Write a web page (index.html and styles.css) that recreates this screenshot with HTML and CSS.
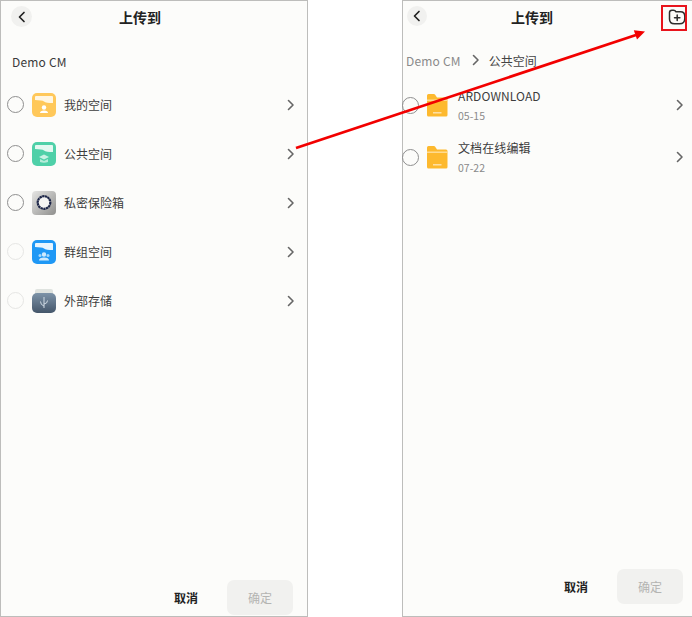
FILE: index.html
```html
<!DOCTYPE html>
<html lang="zh">
<head>
<meta charset="utf-8">
<title>上传到</title>
<link rel="stylesheet" href="styles.css">
</head>
<body>
<svg width="0" height="0" class="defs">
  <symbol id="chev" viewBox="0 0 10 14"><path d="M2.5 2.500 L7 7 L2.5 11.500" fill="none" stroke="#666" stroke-width="1.600" stroke-linecap="round" stroke-linejoin="round"/></symbol>
  <symbol id="back" viewBox="0 0 10 14"><path d="M7 2.500 L2.500 7 L7 11.500" fill="none" stroke="#222" stroke-width="1.700" stroke-linecap="round" stroke-linejoin="round"/></symbol>
  <symbol id="folder" viewBox="0 0 22 24"><path d="M1 2.5 Q1 1 2.5 1 H8 Q9 1 10 3 L11 4.5 H20 Q21.5 4.5 21.5 6 V22 Q21.5 23.5 20 23.5 H2.5 Q1 23.5 1 22 Z" fill="#fdb92e"/><path d="M1 7.2 H21.5" stroke="#fee2a3" stroke-width="1.3"/><path d="M7 19.8 H15.5" stroke="#fee7b8" stroke-width="1.3"/></symbol>
</svg>
<main class="stage">
  <section class="phone phone-left">
    <header class="bar">
      <button class="back"><svg class="back-ic"><use href="#back"/></svg></button>
      <h1 class="title">上传到</h1>
    </header>
    <div class="crumb"><span class="crumb-root">Demo CM</span></div>
    <ul class="list">
      <li class="row">
        <span class="radio"></span>
        <svg class="app" viewBox="0 0 24 24"><rect width="24" height="24" rx="5" fill="#ffc85a"/><path d="M3 4 Q3 3 4 3 H20 Q21 3 21 4 V10 Q14 10 12 8.500 Q10 7 3 7 Z" fill="#fff6e2"/><circle cx="12" cy="14.500" r="2.200" fill="#fff"/><path d="M8 20 Q8 17.500 12 17.500 Q16 17.500 16 20 Z" fill="#fff"/></svg>
        <span class="name">我的空间</span>
        <svg class="chev"><use href="#chev"/></svg>
      </li>
      <li class="row">
        <span class="radio"></span>
        <svg class="app" viewBox="0 0 24 24"><rect width="24" height="24" rx="5" fill="#4fd0a8"/><path d="M3 4 Q3 3 4 3 H20 Q21 3 21 4 V10 Q14 10 12 8.500 Q10 7 3 7 Z" fill="#e4f8f1"/><path d="M7 15 L12 12.500 L17 15 L12 17.500 Z" fill="#c9f2e4"/><path d="M8 17 L12 19 L16 17 V20 Q12 21.500 8 20 Z" fill="#b5ecd9"/></svg>
        <span class="name">公共空间</span>
        <svg class="chev"><use href="#chev"/></svg>
      </li>
      <li class="row">
        <span class="radio"></span>
        <svg class="app" viewBox="0 0 24 24"><defs><linearGradient id="g1" x1="0" y1="0" x2="1" y2="1"><stop offset="0" stop-color="#e6e6e4"/><stop offset="1" stop-color="#8f8f8d"/></linearGradient></defs><rect width="24" height="24" rx="4" fill="url(#g1)"/><circle cx="12" cy="11.500" r="6.300" fill="#f4f4f2" stroke="#1c2547" stroke-width="2.200" stroke-dasharray="2.300 .4"/></svg>
        <span class="name">私密保险箱</span>
        <svg class="chev"><use href="#chev"/></svg>
      </li>
      <li class="row">
        <span class="radio radio-off"></span>
        <svg class="app" viewBox="0 0 24 24"><rect width="24" height="24" rx="5" fill="#1f98f5"/><path d="M3 4 Q3 3 4 3 H20 Q21 3 21 4 V10 Q14 10 12 8.500 Q10 7 3 7 Z" fill="#e8f5fe"/><circle cx="12" cy="14.500" r="2.200" fill="#cfeafd"/><circle cx="8" cy="15.500" r="1.500" fill="#a8d8fb"/><circle cx="16" cy="15.500" r="1.500" fill="#a8d8fb"/><path d="M7 20.500 Q7 17.500 12 17.500 Q17 17.500 17 20.500 Z" fill="#cfeafd"/></svg>
        <span class="name">群组空间</span>
        <svg class="chev"><use href="#chev"/></svg>
      </li>
      <li class="row">
        <span class="radio radio-off"></span>
        <svg class="app" viewBox="0 0 24 24"><defs><linearGradient id="g2" x1="0" y1="0" x2="0" y2="1"><stop offset="0" stop-color="#7d93a8"/><stop offset="1" stop-color="#44566a"/></linearGradient></defs><rect x="3" y="0" width="18" height="6" rx="2" fill="#dfe3df"/><rect y="4" width="24" height="20" rx="5" fill="url(#g2)"/><path d="M12 8 V19 M12 17 Q8.500 16 8.500 12.500 M12 15 Q15.500 14.500 15.500 11.500" fill="none" stroke="#cfdae3" stroke-width="1"/></svg>
        <span class="name">外部存储</span>
        <svg class="chev"><use href="#chev"/></svg>
      </li>
    </ul>
    <footer class="foot foot-left">
      <span class="cancel">取消</span>
      <span class="ok">确定</span>
    </footer>
  </section>

  <section class="phone phone-right">
    <header class="bar">
      <button class="back"><svg class="back-ic"><use href="#back"/></svg></button>
      <h1 class="title">上传到</h1>
      <svg class="newdir" viewBox="0 0 18 16"><path d="M1.500 3.500 Q1.500 1.200 4 1.200 H5.500 Q7.200 1.200 8 2.800 H12.500 Q16.800 2.800 16.800 7.500 V9.500 Q16.800 14.800 11.500 14.800 H6.500 Q1.500 14.800 1.500 10 Z" fill="none" stroke="#2e2e2e" stroke-width="1.500" stroke-linejoin="round"/><path d="M9.200 6 V11.400 M6.500 8.700 H11.900" stroke="#2e2e2e" stroke-width="1.500" stroke-linecap="round"/></svg>
    </header>
    <div class="crumb crumb-r">
      <span class="crumb-muted">Demo CM</span>
      <svg class="crumb-chev"><use href="#chev"/></svg>
      <span class="crumb-now">公共空间</span>
    </div>
    <ul class="list list-r">
      <li class="file">
        <span class="radio"></span>
        <svg class="folder"><use href="#folder"/></svg>
        <div class="meta"><span class="fname">ARDOWNLOAD</span><span class="fdate">05-15</span></div>
        <svg class="chev"><use href="#chev"/></svg>
      </li>
      <li class="file">
        <span class="radio"></span>
        <svg class="folder"><use href="#folder"/></svg>
        <div class="meta"><span class="fname">文档在线编辑</span><span class="fdate">07-22</span></div>
        <svg class="chev"><use href="#chev"/></svg>
      </li>
    </ul>
    <footer class="foot foot-right">
      <span class="cancel">取消</span>
      <span class="ok">确定</span>
    </footer>
  </section>
</main>
<div class="mark"></div>
<svg class="arrow" viewBox="0 0 692 617"><path d="M296 148 L636 35" stroke="#f20000" stroke-width="2.800" fill="none"/><path d="M645 31.500 L637 39.500 L633.800 30.200 Z" fill="#f20000"/></svg>
</body>
</html>
```
FILE: styles.css
```css
* { box-sizing: border-box; }
html, body { margin: 0; padding: 0; background: #fff; }
body {
  width: 692px;
  height: 617px;
  overflow: hidden;
  position: relative;
  font-family: "Noto Sans CJK SC", "Noto Sans", sans-serif;
  color: #333;
}
.defs { position: absolute; }
.stage { display: flex; gap: 94px; height: 617px; }
.phone {
  height: 617px;
  background: #fcfcfa;
  border: 1px solid #bdbdbb;
  display: flex;
  flex-direction: column;
}
.phone-left { width: 308px; }
.phone-right { width: 290px; border-right: 0; }
.bar {
  position: relative;
  height: 31px;
  padding-right: 28px;
  display: flex;
  align-items: center;
  justify-content: center;
}
.phone-right .bar { padding-right: 31px; }
.back {
  position: absolute;
  left: 10px;
  top: 5px;
  width: 21px;
  height: 21px;
  padding: 0;
  border: 0;
  border-radius: 50%;
  background: #f1f1ef;
  display: flex;
  align-items: center;
  justify-content: center;
}
.phone-right .back { left: 4px; top: 5px; width: 20px; height: 20px; }
.back-ic { width: 10px; height: 14px; }
.title {
  margin: 0;
  font-size: 14px;
  line-height: 20px;
  font-weight: 700;
  color: #222;
}
.newdir {
  position: absolute;
  right: 6px;
  top: 8px;
  width: 18px;
  height: 16px;
}
.crumb {
  height: 20px;
  margin-top: 19px;
  padding-left: 11px;
  display: flex;
  align-items: center;
  font-size: 12px;
  letter-spacing: 0.200px;
}
.crumb-root { color: #3a3a3a; }
.crumb-r { margin-top: 18px; padding-left: 3px; }
.crumb-muted { color: #8a8a8a; }
.crumb-chev { width: 10px; height: 14px; margin: 0 8px 0 10px; }
.crumb-now { color: #444; font-size: 12px; letter-spacing: 0; }
.list { list-style: none; margin: 9px 0 0; padding: 0; }
.list-r { margin-top: 9px; }
.row {
  height: 49px;
  display: flex;
  align-items: center;
  padding-left: 6px;
  font-size: 12px;
}
.radio {
  width: 17px;
  height: 17px;
  flex: none;
  border-radius: 50%;
  border: 1.500px solid #8f8f8f;
}
.radio-off { border-color: #e6e6e4; }
.app { width: 24px; height: 24px; flex: none; margin-left: 8px; }
.name { margin-left: 8px; flex: 1; color: #3d3d3d; line-height: 16px; }
.chev { width: 10px; height: 14px; flex: none; margin-right: 11px; }
.file {
  height: 52px;
  display: flex;
  align-items: center;
}
.file .radio { margin: 0 7px 0 -1px; }
.folder { width: 22px; height: 24px; flex: none; }
.meta {
  margin-left: 10px;
  flex: 1;
  display: flex;
  flex-direction: column;
  gap: 5px;
}
.fname { font-size: 12px; line-height: 16px; color: #3d3d3d; letter-spacing: 0.100px; }
.fdate { font-size: 10.500px; line-height: 14px; color: #8a8a8a; }
.phone-right .chev { margin-right: 7px; }
.foot {
  margin-top: auto;
  display: flex;
  align-items: center;
  justify-content: flex-end;
  font-size: 12px;
}
.foot-left { padding: 0 14px 1px 0; }
.foot-right { padding: 0 9px 12px 0; }
.cancel { font-weight: 700; color: #222; margin-right: 29px; }
.ok {
  width: 66px;
  height: 35px;
  border-radius: 7px;
  background: #f1f1ef;
  color: #b4b4b2;
  display: flex;
  align-items: center;
  justify-content: center;
}
.mark {
  position: absolute;
  left: 661px;
  top: 5px;
  width: 26px;
  height: 26px;
  border: 2px solid #e8141c;
}
.arrow {
  position: absolute;
  left: 0;
  top: 0;
  width: 692px;
  height: 617px;
  pointer-events: none;
}
```
